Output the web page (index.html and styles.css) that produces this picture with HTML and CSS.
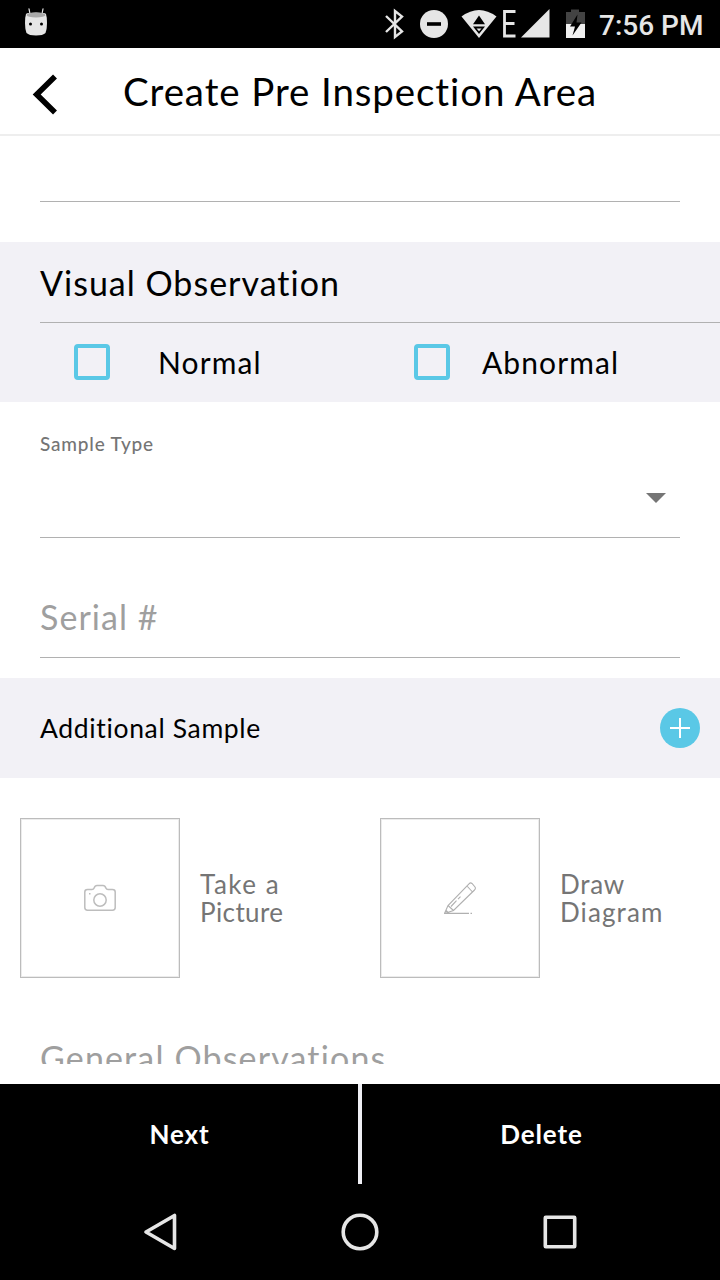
FILE: index.html
```
<!DOCTYPE html>
<html lang="en">
<head>
<meta charset="utf-8">
<title>Create Pre Inspection Area</title>
<link rel="stylesheet" href="styles.css">
</head>
<body>
<div class="status-bar">
  <svg class="status-left" width="24" height="30" viewBox="0 0 24 30">
    <path d="M6 6L5 .8M18 6L19 .8" stroke="#e6e6e6" stroke-width="1.2" stroke-linecap="round"/>
    <path d="M2 6Q3 4.500 12 4.500T22 6Q23 9 23 15T21.500 25Q19 27.500 12 27.500T2.500 25Q1 21 1 15T2 6Z" fill="#e6e6e6"/>
    <ellipse cx="12" cy="7" rx="9.500" ry="2.400" fill="#a9a9a9"/>
    <circle cx="6.500" cy="16" r="1.500"/><circle cx="17.500" cy="16" r="1.500"/>
  </svg>
  <svg class="status-icons" width="206" height="48" viewBox="0 0 206 48">
    <path d="M2 16L18 31.500L11 37V11L18 16.500L2 32" fill="none" stroke="#e6e6e6" stroke-width="2.400"/>
    <circle cx="50" cy="24" r="14" fill="#e6e6e6"/>
    <path d="M43 24H57" stroke="#000" stroke-width="3.600"/>
    <path d="M77.500 16.500Q95 3.500 112.500 16.500L95 38Z" fill="#e6e6e6"/>
    <path d="M89 24.200L95 15.500L101 24.200ZM89 26.500H101L95 34Z"/>
    <path d="M92.500 28.400H97.500L95 31.300Z" fill="#e6e6e6"/>
    <path d="M131.500 11.500H120.500V36H131.500M121 23.500H130.500" fill="none" stroke="#e6e6e6" stroke-width="2.800"/>
    <path d="M137 37.500L165.500 9V37.500Z" fill="#e6e6e6"/>
    <path d="M182 12H187V9.500H195V12H201V24H182Z" fill="#434343"/>
    <path d="M182 24H201V38H182Z" fill="#f0f0f0"/>
    <path d="M193.500 14.500L186 26.500H191L188.500 35.500L197.500 22.500H192.500Z"/>
  </svg>
  <span class="clock">7:56 PM</span>
</div>
<header class="header">
  <svg class="back" width="26" height="42" viewBox="0 0 26 42"><path d="M23 2.500L4.700 20.500L23 38.500" fill="none" stroke="#000" stroke-width="5.600"/></svg>
  <h1 class="title">Create Pre Inspection Area</h1>
</header>
<main class="content">
  <div class="field field-empty"></div>
  <section class="observation">
    <h2 class="observation-title"><span>Visual Observation</span></h2>
    <div class="checks">
      <label class="check"><i class="box"></i><span class="normal">Normal</span></label>
      <label class="check"><i class="box"></i><span class="abnormal">Abnormal</span></label>
    </div>
  </section>
  <div class="field field-select">
    <span class="field-label">Sample Type</span>
    <svg class="caret" width="20" height="10" viewBox="0 0 20 10"><path d="M0 0H20L10 10Z" fill="#757575"/></svg>
  </div>
  <div class="field field-serial"><span class="serial">Serial #</span></div>
  <section class="additional">
    <span class="additional-label">Additional Sample</span>
    <svg width="40" height="40" viewBox="0 0 40 40"><circle cx="20" cy="20" r="20" fill="#5ac8e6"/><path d="M10 20H30M20 10V30" stroke="#fff" stroke-width="2"/></svg>
  </section>
  <div class="media">
    <div class="media-item">
      <div class="frame">
        <svg width="32" height="28" viewBox="0 0 32 28" fill="none" stroke="#bdbdbd" stroke-width="1.500">
          <path d="M3.500 5.500H8Q9.500 5.500 10 4.200Q11 1.500 13 1.500H19Q21 1.500 22 4.200Q22.500 5.500 24 5.500H28.500Q31.200 5.500 31.200 8V23.500Q31.200 26.200 28.500 26.200H3.500Q.8 26.200 .8 23.500V8Q.8 5.500 3.500 5.500Z"/>
          <circle cx="16" cy="16" r="6.200"/><path d="M5 9.700H6.500"/>
        </svg>
      </div>
      <p class="caption"><span class="take">Take a</span><span class="picture">Picture</span></p>
    </div>
    <div class="media-item">
      <div class="frame">
        <svg width="32" height="32" viewBox="0 0 32 32" fill="none" stroke="#b0b0b0" stroke-width="1.100">
          <path d="M.5 31.500L4 23.500L25 1.800Q26.500 .2 28 1.500L31 5Q32 6.500 30.500 8L9.500 28.500ZM4 23.500L9.500 28.500M23 4L28.500 10M7 24.500L12.500 18.700M14 17.200L16.500 14.700M2 28L4 30.500M0 31.400H25M26.500 31.400H28"/>
        </svg>
      </div>
      <p class="caption"><span class="draw">Draw</span><span class="diagram">Diagram</span></p>
    </div>
  </div>
  <div class="general"><span class="general-text">General Observations</span></div>
</main>
<footer class="actions">
  <button class="action">Next</button>
  <div class="divider"></div>
  <button class="action">Delete</button>
</footer>
<nav class="nav-bar">
  <svg width="40" height="40" viewBox="0 0 40 40"><path d="M34.500 3.500V36.500L6 20Z"/></svg>
  <svg width="40" height="40" viewBox="0 0 40 40"><circle cx="20" cy="20" r="16.800"/></svg>
  <svg width="40" height="40" viewBox="0 0 40 40"><rect x="5.300" y="5.300" width="29.400" height="29.400" rx=".5"/></svg>
</nav>
</body>
</html>
```
FILE: styles.css
```
* { box-sizing: border-box; }
body {
  margin: 0;
  width: 720px;
  height: 1280px;
  overflow: hidden;
  display: flex;
  flex-direction: column;
  background: #fff;
  color: #000;
  font-family: Lato, "Open Sans", sans-serif;
  font-variant-ligatures: none;
}
svg { display: block; flex: none; }
h1, h2, p { margin: 0; font-weight: 400; }
span { white-space: nowrap; }

.status-bar {
  height: 48px;
  background: #000;
  display: flex;
  align-items: center;
  padding: 0 16px 0 24px;
}
.status-left { margin-top: -3px; }
.status-icons { margin-left: 336px; }
.clock {
  margin-left: 9px;
  padding-top: 3px;
  color: #e6e6e6;
  font: 500 28px/34px Roboto, sans-serif;
  white-space: nowrap;
}

.header {
  height: 88px;
  border-bottom: 2px solid #eee;
  display: flex;
  align-items: center;
  padding-left: 32px;
}
.back { margin-top: 7px; }
.title {
  margin: 0 0 0 65px;
  padding-bottom: 1px;
  font-size: 38.5px;
  line-height: 44px;
  letter-spacing: .9px;
  white-space: nowrap;
}

.content { height: 928px; overflow: hidden; }
.field { margin: 0 40px; border-bottom: 1px solid #b1b1b1; display: flex; }
.field-empty { height: 66px; }

.observation { margin-top: 40px; height: 160px; background: #f2f1f6; }
.observation-title {
  height: 81px;
  margin-left: 40px;
  border-bottom: 1px solid #b1b1b1;
  font-size: 34px;
  line-height: 81px;
  letter-spacing: 1px;
}
.checks { display: grid; grid-template-columns: 340px 340px; padding-left: 40px; height: 78px; }
.check { display: flex; align-items: center; padding-left: 34px; font-size: 30px; line-height: 78px; letter-spacing: 1.1px; }
.box { width: 36px; height: 36px; border: 4px solid #5ac8e6; border-radius: 4px; flex: none; }
.normal { margin-left: 48px; }
.abnormal { margin-left: 32px; }

.field-select { height: 136px; justify-content: space-between; padding: 31px 14px 0 0; }
.field-label { font-size: 19px; line-height: 22px; letter-spacing: .8px; color: #757575; font-weight: 500; }
.caret { margin-top: 60px; }
.field-serial { height: 120px; padding-top: 59px; font-size: 34px; line-height: 40px; letter-spacing: 1.05px; color: #9f9f9f; }

.additional {
  margin-top: 20px;
  height: 100px;
  background: #f2f1f6;
  display: flex;
  align-items: center;
  justify-content: space-between;
  padding: 0 20px 0 40px;
  font-size: 26.5px;
  letter-spacing: .65px;
}
.media { display: grid; grid-template-columns: 360px 360px; margin-top: 40px; }
.media-item { display: flex; align-items: center; padding-left: 20px; }
.frame {
  width: 160px;
  height: 160px;
  border: 1px solid #bcbcbc;
  box-shadow: inset 0 0 0 1px #ececec;
  display: flex;
  align-items: center;
  justify-content: center;
}
.caption {
  display: flex;
  flex-direction: column;
  margin-left: 20px;
  font-size: 26px;
  line-height: 28px;
  color: #757575;
}
.take { letter-spacing: 1.5px; }
.picture { letter-spacing: .4px; }
.draw { letter-spacing: .7px; }
.diagram { letter-spacing: 1.1px; }
.general { margin: 60px 40px 0; font-size: 34px; line-height: 40px; letter-spacing: 1.15px; color: #9f9f9f; }

.actions { margin-top: 20px; height: 100px; background: #000; display: flex; }
.action {
  flex: 1;
  border: 0;
  padding: 0 0 0 1px;
  background: none;
  color: #fff;
  font: 700 26px/32px Lato, "Open Sans", sans-serif;
  letter-spacing: .9px;
}
.divider { width: 4px; background: #efeff4; }
.nav-bar {
  height: 96px;
  background: #000;
  display: flex;
  align-items: center;
  justify-content: center;
  gap: 160px;
  fill: none;
  stroke: #e6e6e6;
  stroke-width: 3.600;
  stroke-linejoin: round;
}
```
